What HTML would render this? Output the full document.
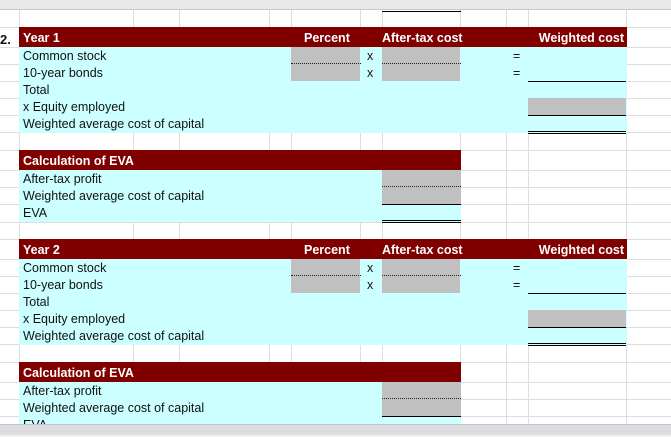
<!DOCTYPE html><html><head><style>
body{margin:0;width:671px;height:437px;overflow:hidden;background:#fff;font-family:"Liberation Sans",sans-serif;position:relative}
div{position:absolute;box-sizing:border-box}
.v{top:0;width:1px;height:437px;background:#dedede}
.h{left:0;width:671px;height:1px;background:#dedede}
.red{background:#800000;color:#fff;font-weight:bold;font-size:12.5px;line-height:22px;height:20px}
.cy{background:#ccffff}
.g{background:#c0c0c0}
.t{font-size:12.5px;line-height:19px;color:#111;white-space:nowrap}
.dot{border-bottom:1px dotted #222;height:0}
.sol{height:1px;background:#000}
.dbl{height:3px;border-top:1px solid #000;border-bottom:1px solid #000}
</style></head><body>
<div class="v" style="left:19px"></div><div class="v" style="left:133px"></div><div class="v" style="left:179px"></div><div class="v" style="left:269px"></div><div class="v" style="left:291px"></div><div class="v" style="left:360px"></div><div class="v" style="left:382px"></div><div class="v" style="left:460px"></div><div class="v" style="left:506px"></div><div class="v" style="left:528px"></div><div class="v" style="left:626px"></div>
<div class="h" style="top:27px"></div><div class="h" style="top:47px"></div><div class="h" style="top:64px"></div><div class="h" style="top:81px"></div><div class="h" style="top:98px"></div><div class="h" style="top:115px"></div><div class="h" style="top:132px"></div><div class="h" style="top:150px"></div><div class="h" style="top:170px"></div><div class="h" style="top:187px"></div><div class="h" style="top:204px"></div><div class="h" style="top:222px"></div><div class="h" style="top:239px"></div><div class="h" style="top:259px"></div><div class="h" style="top:276px"></div><div class="h" style="top:293px"></div><div class="h" style="top:310px"></div><div class="h" style="top:327px"></div><div class="h" style="top:344px"></div><div class="h" style="top:362px"></div><div class="h" style="top:382px"></div><div class="h" style="top:399px"></div><div class="h" style="top:416px"></div>
<div style="left:0;top:0;width:671px;height:10px;background:#e9e9ec;border-bottom:1px solid #c8c8c8"></div>
<div class="sol" style="left:382px;top:11px;width:79px"></div>

<div class="t" style="left:0;top:30px;font-weight:bold;font-size:13px">2.</div>
<div class="red" style="left:19px;top:27px;width:608px"><span style="position:absolute;left:4px">Year 1</span><span style="position:absolute;left:285px">Percent</span><span style="position:absolute;left:363px">After-tax cost</span><span style="position:absolute;right:3px">Weighted cost</span></div>
<div class="cy" style="left:19px;top:47px;width:608px;height:86px"></div>
<div class="g" style="left:291px;top:47px;width:69px;height:34px"></div>
<div class="g" style="left:382px;top:47px;width:78px;height:34px"></div>
<div class="dot" style="left:291px;top:63px;width:70px"></div><div class="dot" style="left:382px;top:63px;width:79px"></div>
<div class="g" style="left:528px;top:98px;width:98px;height:17px"></div>
<div class="sol" style="left:528px;top:81px;width:98px"></div><div class="sol" style="left:528px;top:115px;width:98px"></div>
<div class="dbl" style="left:528px;top:131px;width:98px"></div>
<div class="t" style="left:23px;top:47px">Common stock</div><div class="t" style="left:23px;top:64px">10-year bonds</div><div class="t" style="left:23px;top:81px">Total</div><div class="t" style="left:23px;top:98px">x Equity employed</div><div class="t" style="left:23px;top:115px">Weighted average cost of capital</div>
<div class="t" style="left:367px;top:47px">x</div><div class="t" style="left:367px;top:64px">x</div><div class="t" style="left:513px;top:47px">=</div><div class="t" style="left:513px;top:64px">=</div>

<div class="red" style="left:19px;top:150px;width:442px"><span style="position:absolute;left:4px">Calculation of EVA</span></div>
<div class="cy" style="left:19px;top:170px;width:442px;height:52px"></div>
<div class="g" style="left:382px;top:170px;width:79px;height:34px"></div>
<div class="dot" style="left:382px;top:186px;width:79px"></div><div class="sol" style="left:382px;top:204px;width:79px"></div>
<div class="dbl" style="left:382px;top:220px;width:79px"></div>
<div class="t" style="left:23px;top:170px">After-tax profit</div><div class="t" style="left:23px;top:187px">Weighted average cost of capital</div><div class="t" style="left:23px;top:204px">EVA</div>

<div class="red" style="left:19px;top:239px;width:608px;height:20px"><span style="position:absolute;left:4px">Year 2</span><span style="position:absolute;left:285px">Percent</span><span style="position:absolute;left:363px">After-tax cost</span><span style="position:absolute;right:3px">Weighted cost</span></div>
<div class="cy" style="left:19px;top:259px;width:608px;height:86px"></div>
<div class="g" style="left:291px;top:259px;width:69px;height:34px"></div>
<div class="g" style="left:382px;top:259px;width:78px;height:34px"></div>
<div class="dot" style="left:291px;top:275px;width:70px"></div><div class="dot" style="left:382px;top:275px;width:79px"></div>
<div class="g" style="left:528px;top:310px;width:98px;height:17px"></div>
<div class="sol" style="left:528px;top:293px;width:98px"></div><div class="sol" style="left:528px;top:327px;width:98px"></div>
<div class="dbl" style="left:528px;top:343px;width:98px"></div>
<div class="t" style="left:23px;top:259px">Common stock</div><div class="t" style="left:23px;top:276px">10-year bonds</div><div class="t" style="left:23px;top:293px">Total</div><div class="t" style="left:23px;top:310px">x Equity employed</div><div class="t" style="left:23px;top:327px">Weighted average cost of capital</div>
<div class="t" style="left:367px;top:259px">x</div><div class="t" style="left:367px;top:276px">x</div><div class="t" style="left:513px;top:259px">=</div><div class="t" style="left:513px;top:276px">=</div>

<div class="red" style="left:19px;top:362px;width:442px"><span style="position:absolute;left:4px">Calculation of EVA</span></div>
<div class="cy" style="left:19px;top:382px;width:442px;height:52px"></div>
<div class="g" style="left:382px;top:382px;width:79px;height:34px"></div>
<div class="dot" style="left:382px;top:398px;width:79px"></div><div class="sol" style="left:382px;top:416px;width:79px"></div>
<div class="t" style="left:23px;top:382px">After-tax profit</div><div class="t" style="left:23px;top:399px">Weighted average cost of capital</div><div class="t" style="left:23px;top:416px">EVA</div>

<div style="left:0;top:424px;width:671px;height:13px;background:#dcdce0;border-top:1px solid #c4c4c8"></div>
<div style="left:0;top:435px;width:671px;height:2px;background:#f2f2f2"></div>
</body></html>
